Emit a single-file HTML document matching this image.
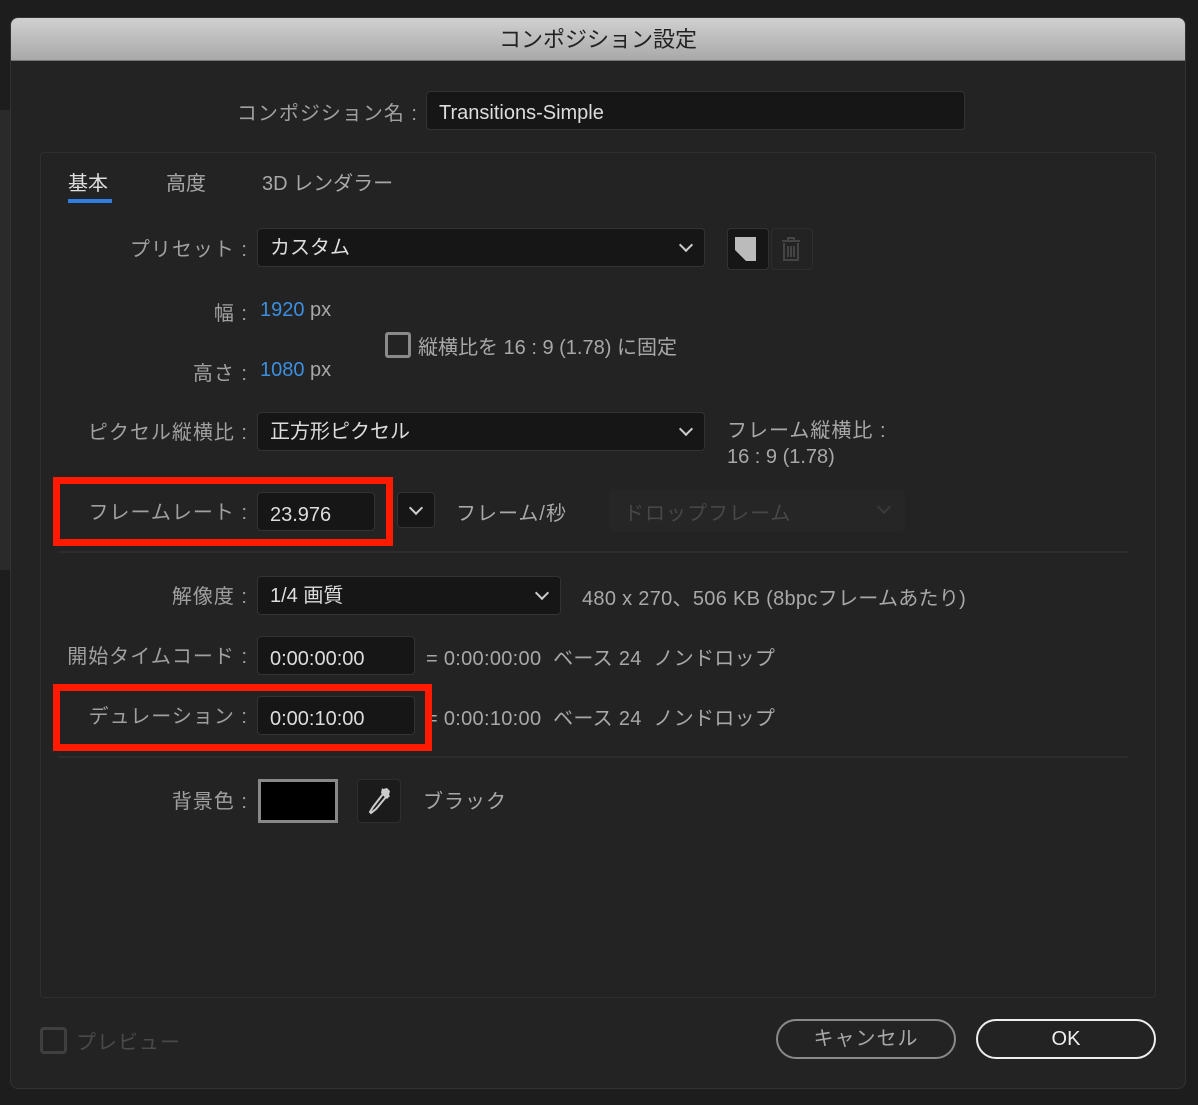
<!DOCTYPE html>
<html><head><meta charset="utf-8"><style>
*{margin:0;padding:0;box-sizing:border-box}
body{width:1198px;height:1105px;background:#1d1d1d;position:relative;overflow:hidden;font-family:"Liberation Sans","Noto Sans CJK JP",sans-serif;color:#a8a8a8;font-size:20px}
.a{position:absolute;white-space:nowrap}
.dlg{position:absolute;left:10px;top:17px;width:1176px;height:1072px;background:#232323;border-radius:8px;border:1px solid #333;overflow:hidden}
.title{position:absolute;left:0;top:0;width:100%;height:43px;background:linear-gradient(#d0d0d0,#a9a9a9);border-bottom:1px solid #777;color:#222;font-size:22px;text-align:center;line-height:44px}
.panel{position:absolute;left:40px;top:152px;width:1116px;height:846px;border:1px solid #2f2f2f;border-radius:4px;background:#232323}
.f{position:absolute;background:#161616;border:1px solid #333;border-radius:4px;color:#ddd;font-size:20px;padding-left:12px}
.lbl{position:absolute;text-align:right;color:#a0a0a0;letter-spacing:1px}
.chev{position:absolute;width:10px;height:10px;border-right:2px solid #ccc;border-bottom:2px solid #ccc;transform:rotate(45deg)}
.red{position:absolute;border:7px solid #ff1a00}
.sep{position:absolute;height:2px;background:#2c2c2c}
.blue{color:#3b8fe0}
</style></head><body>
<div style="position:absolute;left:0;top:110px;width:10px;height:460px;background:#2a2a2a"></div>
<div class="dlg"><div class="title">コンポジション設定</div></div>
<div class="lbl a" style="left:200px;top:97px;width:218px">コンポジション名 :</div>
<div class="f" style="left:426px;top:91px;width:539px;height:39px;line-height:42px">Transitions-Simple</div>
<div class="panel"></div>
<div class="a" style="left:68px;top:167px;color:#ddd">基本</div>
<div class="a" style="left:68px;top:199px;width:44px;height:4px;background:#2d7ee0"></div>
<div class="a" style="left:166px;top:167px">高度</div>
<div class="a" style="left:262px;top:167px">3D レンダラー</div>

<div class="lbl a" style="left:80px;top:233px;width:168px">プリセット :</div>
<div class="f" style="left:257px;top:228px;width:448px;height:39px;line-height:38px">カスタム</div>
<div class="chev" style="left:681px;top:240px"></div>
<div class="a" style="left:727px;top:228px;width:42px;height:42px;background:#161616;border:1px solid #333;border-radius:4px"></div>
<svg class="a" style="left:735px;top:237px" width="24" height="24" viewBox="0 0 24 24"><path d="M0 0H21V24H11L0 13Z" fill="#bbb"/><path d="M0 15L9 24H0Z" fill="#bbb" opacity="0"/></svg>
<div class="a" style="left:771px;top:228px;width:42px;height:42px;border:1px solid #2e2e2e;border-radius:4px"></div>
<svg class="a" style="left:780px;top:236px" width="22" height="26" viewBox="0 0 22 26"><g fill="none" stroke="#444" stroke-width="2"><path d="M2 5H20M8 5V2H14V5M4 7V24H18V7M8 10V21M11 10V21M14 10V21"/></g></svg>

<div class="lbl a" style="left:150px;top:297px;width:98px">幅 :</div>
<div class="a" style="left:260px;top:299px"><span class="blue">1920</span> px</div>
<div class="lbl a" style="left:150px;top:357px;width:98px">高さ :</div>
<div class="a" style="left:260px;top:359px"><span class="blue">1080</span> px</div>
<div class="a" style="left:385px;top:332px;width:26px;height:26px;border:3px solid #8a8a8a;border-radius:3px"></div>
<div class="a" style="left:418px;top:331px">縦横比を 16 : 9 (1.78) に固定</div>

<div class="lbl a" style="left:50px;top:416px;width:198px">ピクセル縦横比 :</div>
<div class="f" style="left:257px;top:412px;width:448px;height:39px;line-height:38px">正方形ピクセル</div>
<div class="chev" style="left:681px;top:424px"></div>
<div class="a" style="left:727px;top:414px;letter-spacing:1px">フレーム縦横比 :</div>
<div class="a" style="left:727px;top:446px">16 : 9 (1.78)</div>

<div class="lbl a" style="left:60px;top:496px;width:188px">フレームレート :</div>
<div class="f" style="left:257px;top:492px;width:118px;height:39px;line-height:44px">23.976</div>
<div class="a" style="left:397px;top:492px;width:38px;height:36px;background:#161616;border:1px solid #333;border-radius:4px"></div>
<div class="chev" style="left:411px;top:503px"></div>
<div class="a" style="left:456px;top:497px;letter-spacing:1px">フレーム/秒</div>
<div class="a" style="left:609px;top:490px;width:296px;height:42px;background:#262626;border-radius:4px"></div>
<div class="a" style="left:624px;top:497px;color:#474747;letter-spacing:1px">ドロップフレーム</div>
<div class="chev" style="left:879px;top:502px;border-color:#3a3a3a"></div>
<div class="red" style="left:53px;top:477px;width:340px;height:69px"></div>
<div class="sep" style="left:58px;top:551px;width:1070px"></div>

<div class="lbl a" style="left:60px;top:580px;width:188px">解像度 :</div>
<div class="f" style="left:257px;top:576px;width:304px;height:39px;line-height:38px">1/4 画質</div>
<div class="chev" style="left:537px;top:588px"></div>
<div class="a" style="left:582px;top:582px;letter-spacing:0.3px">480 x 270、506 KB (8bpcフレームあたり)</div>

<div class="lbl a" style="left:40px;top:640px;width:208px">開始タイムコード :</div>
<div class="f" style="left:257px;top:636px;width:158px;height:39px;line-height:44px">0:00:00:00</div>
<div class="a" style="left:426px;top:642px;letter-spacing:0.3px">= 0:00:00:00&nbsp; ベース 24&nbsp; ノンドロップ</div>

<div class="lbl a" style="left:60px;top:700px;width:188px">デュレーション :</div>
<div class="f" style="left:257px;top:696px;width:158px;height:39px;line-height:44px">0:00:10:00</div>
<div class="a" style="left:426px;top:702px;letter-spacing:0.3px">= 0:00:10:00&nbsp; ベース 24&nbsp; ノンドロップ</div>
<div class="red" style="left:53px;top:684px;width:379px;height:67px"></div>
<div class="sep" style="left:58px;top:756px;width:1070px"></div>

<div class="lbl a" style="left:100px;top:785px;width:148px">背景色 :</div>
<div class="a" style="left:258px;top:779px;width:80px;height:44px;background:#000;border:3px solid #888"></div>
<div class="a" style="left:357px;top:779px;width:44px;height:44px;background:#1b1b1b;border:1px solid #2e2e2e;border-radius:4px"></div>
<svg class="a" style="left:364px;top:785px" width="30" height="32" viewBox="0 0 30 32"><path d="M19 9 l3 3 -10 12 -5 4 -1 -1 3 -5z" fill="none" stroke="#ccc" stroke-width="2"/><path d="M17 8 l6 6 3-3 -1-1 1-4 -3-3 -4 1 -1 -1z" fill="#ccc"/></svg>
<div class="a" style="left:423px;top:785px;letter-spacing:1px">ブラック</div>

<div class="a" style="left:40px;top:1027px;width:27px;height:27px;border:3px solid #3f3f3f;border-radius:4px"></div>
<div class="a" style="left:76px;top:1026px;color:#4a4a4a;letter-spacing:1px">プレビュー</div>
<div class="a" style="left:776px;top:1019px;width:180px;height:40px;border:2px solid #8a8a8a;border-radius:20px;text-align:center;line-height:36px;color:#a8a8a8;letter-spacing:1px">キャンセル</div>
<div class="a" style="left:976px;top:1019px;width:180px;height:40px;border:2px solid #eee;border-radius:20px;text-align:center;line-height:36px;color:#eee">OK</div>
</body></html>
